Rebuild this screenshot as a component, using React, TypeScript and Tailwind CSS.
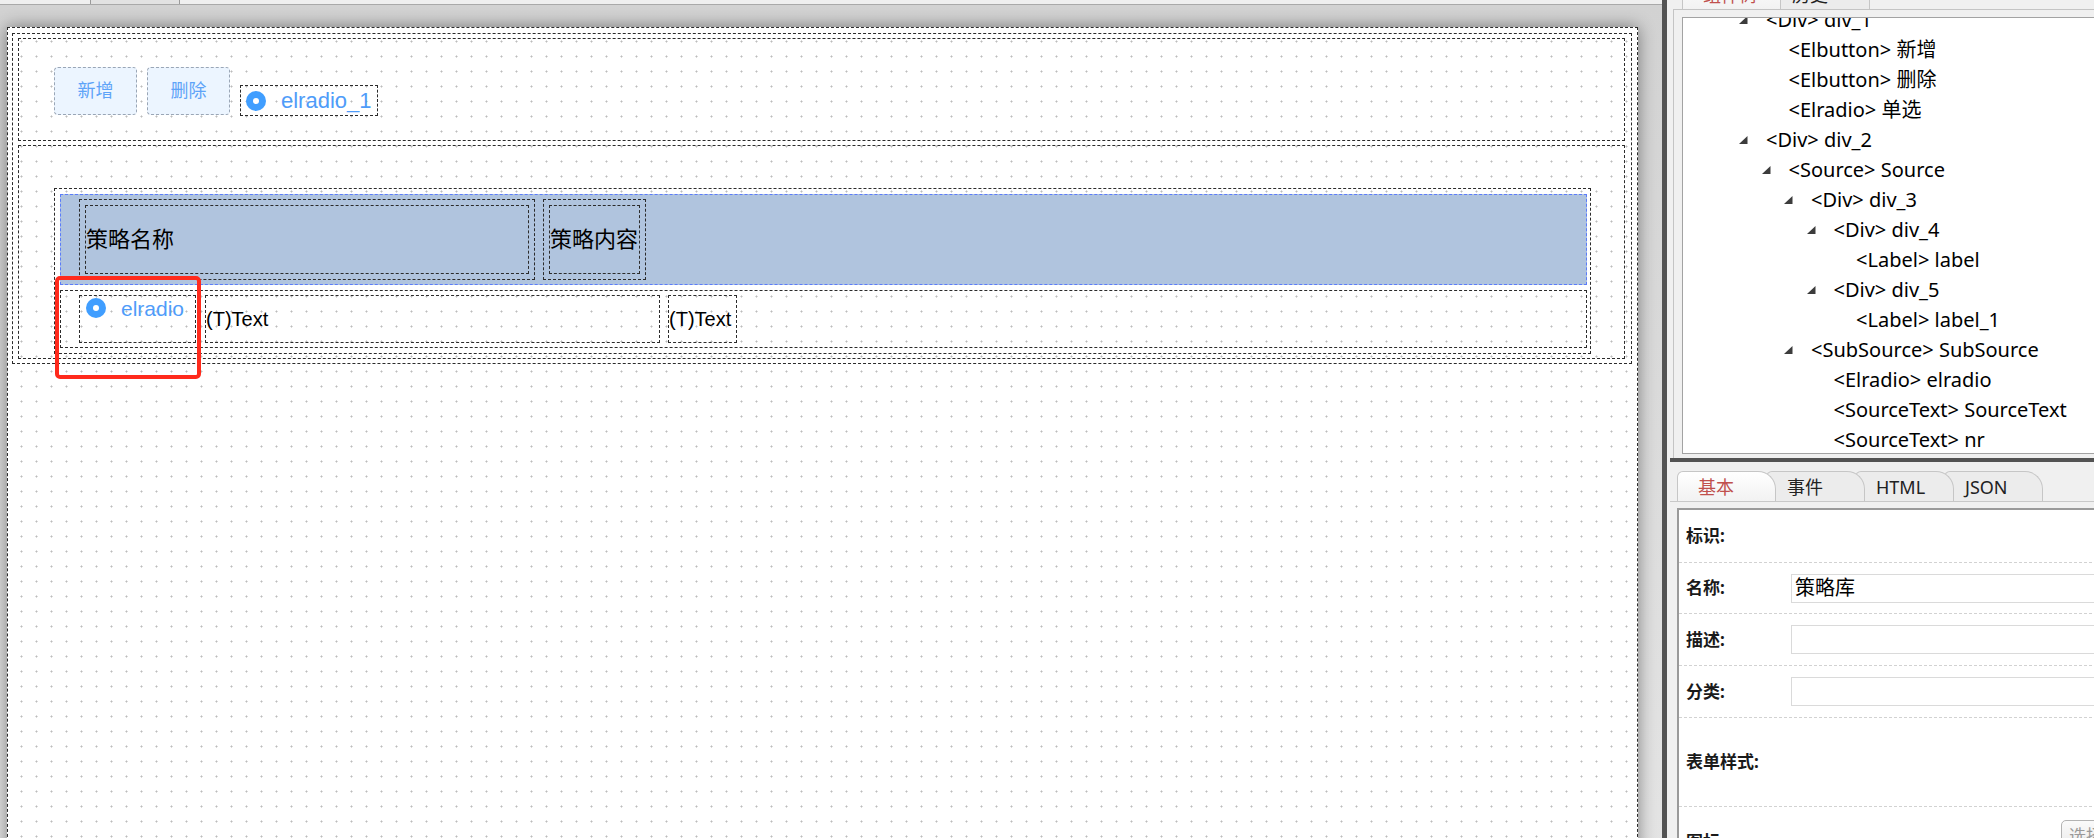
import React from 'react';

type Node = { lvl: number; exp?: boolean; tag: string; name: string };

const tree: Node[] = [
  { lvl: 0, exp: true, tag: 'Div', name: 'div_1' },
  { lvl: 1, tag: 'Elbutton', name: '新增' },
  { lvl: 1, tag: 'Elbutton', name: '删除' },
  { lvl: 1, tag: 'Elradio', name: '单选' },
  { lvl: 0, exp: true, tag: 'Div', name: 'div_2' },
  { lvl: 1, exp: true, tag: 'Source', name: 'Source' },
  { lvl: 2, exp: true, tag: 'Div', name: 'div_3' },
  { lvl: 3, exp: true, tag: 'Div', name: 'div_4' },
  { lvl: 4, tag: 'Label', name: 'label' },
  { lvl: 3, exp: true, tag: 'Div', name: 'div_5' },
  { lvl: 4, tag: 'Label', name: 'label_1' },
  { lvl: 2, exp: true, tag: 'SubSource', name: 'SubSource' },
  { lvl: 3, tag: 'Elradio', name: 'elradio' },
  { lvl: 3, tag: 'SourceText', name: 'SourceText' },
  { lvl: 3, tag: 'SourceText', name: 'nr' },
];

function RadioDot() {
  return (
    <span className="w-[20px] h-[20px] rounded-full bg-[#409eff] flex items-center justify-center shrink-0">
      <span className="w-[6px] h-[6px] rounded-full bg-white" />
    </span>
  );
}

function Tab({ label, active, z }: { label: string; active?: boolean; z: string }) {
  return (
    <div
      className={`relative ${z} h-[30px] w-[99px] shrink-0 -mr-[10px] rounded-tl-[6px] rounded-tr-[18px] border border-b-0 border-[#c6c6c6] pl-[20px] flex items-center text-[18px] leading-none whitespace-nowrap ${
        active ? 'bg-gradient-to-b from-[#ffffff] to-[#f2f2f2] text-[#c0504d]' : 'bg-[#ececec] text-[#222222]'
      }`}
    >
      {label}
    </div>
  );
}

function Canvas() {
  return (
    <div className="w-[1631px] h-[830px] border border-dashed border-[#2b2b2b] bg-white bg-[radial-gradient(circle,#bcbcbc_0.8px,transparent_1.25px)] bg-[length:15px_15px] bg-[position:6px_6px] shadow-[0_0_16px_rgba(0,0,0,0.45)] pl-[4px] pt-[5px] font-['Liberation_Sans','Noto_Sans_CJK_SC',sans-serif]">
      {/* outer container */}
      <div className="w-[1620px] border border-dashed border-[#2b2b2b] pl-[5px] pt-[4px] pr-[6px] pb-[4px] flex flex-col">
        {/* div_1 */}
        <div className="h-[103px] border border-dashed border-[#2b2b2b] flex items-end gap-[10px] pl-[35px] pb-[24px]">
          <div className="mb-[1px] w-[83px] h-[48px] rounded-[4px] border border-dashed border-[#9aa6b6] bg-[#ecf5ff] text-[#5ea3f8] text-[18px] flex items-center justify-center">
            新增
          </div>
          <div className="mb-[1px] w-[83px] h-[48px] rounded-[4px] border border-dashed border-[#9aa6b6] bg-[#ecf5ff] text-[#5ea3f8] text-[18px] flex items-center justify-center">
            删除
          </div>
          <div className="w-[138px] h-[31px] border border-dashed border-[#2b2b2b] flex items-center pl-[5px] gap-[15px] whitespace-nowrap">
            <RadioDot />
            <span className="text-[22px] leading-[26px] text-[#4f9cf9]">elradio_1</span>
          </div>
        </div>
        {/* div_2 */}
        <div className="mt-[4px] border border-dashed border-[#2b2b2b] pl-[35px] pt-[42px] pr-[33px] pb-[4px]">
          {/* Source table */}
          <div className="border border-dashed border-[#2b2b2b] pl-[5px] pt-[5px] pr-[3px] pb-[5px] flex flex-col">
            {/* header */}
            <div className="h-[91px] border border-dashed border-[#5b7cfa] bg-[#b0c4de] pl-[18px] pt-[4px] flex items-start gap-[8px] text-[22px] text-black">
              <div className="w-[456px] h-[81px] border border-dashed border-[#2b2b2b] p-[5px]">
                <div className="h-full border border-dashed border-[#2b2b2b] flex items-center">策略名称</div>
              </div>
              <div className="w-[103px] h-[81px] border border-dashed border-[#2b2b2b] p-[5px]">
                <div className="h-full border border-dashed border-[#2b2b2b] flex items-center whitespace-nowrap">策略内容</div>
              </div>
            </div>
            {/* SubSource row */}
            <div className="mt-[5px] h-[58px] border border-dashed border-[#2b2b2b] pl-[18px] pt-[4px] flex items-start">
              <div className="w-[117px] h-[48px] border border-dashed border-[#2b2b2b] pl-[6px] pt-[2px] flex items-start gap-[15px]">
                <RadioDot />
                <span className="text-[21px] leading-[22px] text-[#4f9cf9]">elradio</span>
              </div>
              <div className="ml-[9px] w-[455px] h-[48px] border border-dashed border-[#2b2b2b] flex items-center text-[20px] text-black">
                (T)Text
              </div>
              <div className="ml-[8px] w-[69px] h-[48px] border border-dashed border-[#2b2b2b] flex items-center text-[20px] text-black whitespace-nowrap overflow-hidden">
                (T)Text
              </div>
            </div>
          </div>
        </div>
      </div>
    </div>
  );
}

function PropRow({ label, h, children }: { label: string; h: string; children?: React.ReactNode }) {
  return (
    <div className={`${h} border-b border-dashed border-[#d2d2d2] pl-[7px] flex items-center`}>
      <span className="w-[105px] shrink-0 text-[17px] font-bold text-[#1a1a1a]">{label}</span>
      {children}
    </div>
  );
}

function Input({ value }: { value?: string }) {
  return (
    <div className="flex-1 h-[29px] border border-[#dadada] bg-white pl-[3px] flex items-center text-[20px] text-black">
      {value}
    </div>
  );
}

export default function App() {
  return (
    <div className="relative flex w-[2094px] h-[838px] overflow-hidden bg-[#f0f0f0] font-['Noto_Sans','Noto_Sans_CJK_SC',sans-serif]">
      {/* Left design area */}
      <div className="flex flex-col w-[1662px] h-full shrink-0 bg-[#e0e0e0] overflow-hidden">
        <div className="h-[5px] shrink-0 bg-[#efefef] border-b border-[#a9a9a9]">
          <div className="ml-[90px] w-[90px] h-full border-x border-[#9a9a9a] bg-[#e2e2e2]" />
        </div>
        <div className="flex-1 pl-[7px] pt-[22px] bg-gradient-to-b from-[#d2d2d2] to-[#e4e4e4]">
          <Canvas />
        </div>
      </div>

      {/* vertical splitter */}
      <div className="w-[5px] h-full shrink-0 bg-[#535353]" />

      {/* Right panel */}
      <div className="w-[427px] h-full shrink-0 flex flex-col bg-[#f0f0f0]">
        {/* tree section */}
        <div className="ml-[6px] h-[458px] shrink-0 flex flex-col overflow-hidden">
          <div className="h-[9px] shrink-0 overflow-hidden flex items-end pl-[9px]">
            <Tab label="组件树" active z="z-20" />
            <Tab label="历史" z="z-10" />
          </div>
          <div className="flex-1 border-l border-t border-[#c4c4c4] pl-[8px] pt-[7px] overflow-hidden">
            <div className="w-[520px] h-[437px] border-l border-t border-b border-[#a3a3a3] bg-white overflow-hidden">
              <div className="-mt-[13px] flex flex-col">
                {tree.map((n, i) => (
                  <div
                    key={i}
                    className="h-[30px] shrink-0 flex items-center whitespace-nowrap text-[20px] text-black"
                    style={{ paddingLeft: 55 + 22.5 * n.lvl }}
                  >
                    <span className="w-[28px] shrink-0 flex items-center">
                      {n.exp && (
                        <svg width="10" height="10" viewBox="0 0 10 10">
                          <polygon points="9.5,1 9.5,9 1,9" fill="#3c3c3c" />
                        </svg>
                      )}
                    </span>
                    <span>{`<${n.tag}> ${n.name}`}</span>
                  </div>
                ))}
              </div>
            </div>
          </div>
        </div>

        {/* horizontal splitter */}
        <div className="ml-[3px] h-[4px] shrink-0 bg-[#535353]" />

        {/* properties section */}
        <div className="ml-[3px] flex-1 flex flex-col overflow-hidden">
          <div className="h-[40px] shrink-0 flex items-end pl-[7px] border-b border-[#c8c8c8]">
            <Tab label="基本" active z="z-40" />
            <Tab label="事件" z="z-30" />
            <Tab label="HTML" z="z-20" />
            <Tab label="JSON" z="z-10" />
          </div>
          <div className="mt-[6px] ml-[7px] w-[480px] flex-1 border-t-2 border-l-2 border-[#9a9a9a] bg-white flex flex-col">
            <PropRow label="标识:" h="h-[53px]" />
            <PropRow label="名称:" h="h-[51px]">
              <Input value="策略库" />
            </PropRow>
            <PropRow label="描述:" h="h-[52px]">
              <Input />
            </PropRow>
            <PropRow label="分类:" h="h-[52px]">
              <Input />
            </PropRow>
            <PropRow label="表单样式:" h="h-[89px]" />
            <div className="h-[80px] pl-[7px] flex items-start">
              <span className="w-[375px] h-[70px] shrink-0 flex items-center text-[17px] font-bold text-[#1a1a1a]">图标:</span>
              <div className="mt-[13px] h-[32px] px-[7px] rounded-[5px] border border-[#b3b3b3] bg-gradient-to-b from-[#fafafa] to-[#e9e9e9] flex items-center text-[17px] text-[#9a9a9a] whitespace-nowrap">
                选择
              </div>
            </div>
          </div>
        </div>
      </div>

      {/* red highlight */}
      <div className="absolute left-[55px] top-[276px] w-[146px] h-[103px] border-[4px] border-[#ff2a1c] rounded-[5px]" />
    </div>
  );
}
